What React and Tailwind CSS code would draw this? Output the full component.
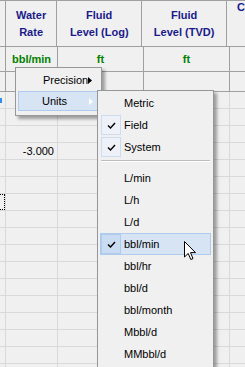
import React from 'react'

const font = "font-['Liberation_Sans',Arial,sans-serif]"

function Check() {
  return (
    <svg width="9" height="7" viewBox="0 0 9 7">
      <polyline points="1,3.5 3.5,6 8,1" fill="none" stroke="#000" strokeWidth="1.4" />
    </svg>
  )
}

function Arrow({ color }) {
  return (
    <svg width="4" height="7" viewBox="0 0 4 7">
      <polygon points="0,0 4,3.5 0,7" fill={color} />
    </svg>
  )
}

function Cursor() {
  return (
    <svg width="13" height="20" viewBox="0 0 13 20">
      <path
        d="M0.5 0.5 L0.5 16 L4.2 12.4 L6.8 18.5 L9 17.6 L6.5 11.6 L11.5 11.6 Z"
        fill="#fff"
        stroke="#000"
        strokeWidth="1"
        strokeLinejoin="miter"
      />
    </svg>
  )
}

function SubItem({ label, checked, active }) {
  return (
    <div
      className={`h-[22px] flex items-center border ${
        active ? 'bg-[#d6e4f4] border-[#aecbed]' : 'border-transparent'
      }`}
    >
      <div className="w-[22px] h-full flex items-center">
        {checked && (
          <div
            className={`w-[20px] h-[20px] flex items-center justify-center border ${
              active ? 'bg-[#c9dcf2] border-[#aecbed]' : 'bg-[#eef2f8] border-[#cddcee]'
            }`}
          >
            <Check />
          </div>
        )}
      </div>
      <span className="ml-[1px] text-black">{label}</span>
    </div>
  )
}

export default function App() {
  const dataRows = Array.from({ length: 17 })

  return (
    <div className={`relative w-[245px] h-[367px] overflow-hidden bg-[#f0f0f0] text-[11px] ${font}`}>
      <div className="border-t border-[#a0a0a0]">
        {/* header */}
        <div className="flex h-[46px] border-b border-[#a0a0a0] font-bold text-[#1a1a8a] leading-[17px]">
          <div className="w-[6px] border-r border-[#a0a0a0]" />
          <div className="w-[52px] border-r border-[#a0a0a0] flex items-center justify-center text-center">
            Water<br />Rate
          </div>
          <div className="w-[86px] border-r border-[#a0a0a0] flex items-center justify-center text-center">
            Fluid<br />Level (Log)
          </div>
          <div className="w-[86px] border-r border-[#a0a0a0] flex items-center justify-center text-center">
            Fluid<br />Level (TVD)
          </div>
          <div className="flex-1 pl-[10px] leading-[13px]">C</div>
        </div>

        {/* units */}
        <div className="flex h-[25px] border-b border-[#a0a0a0] font-bold text-[#008000]">
          <div className="w-[6px] border-r border-[#a0a0a0]" />
          <div className="w-[52px] border-r border-[#a0a0a0] flex items-center justify-center">bbl/min</div>
          <div className="w-[86px] border-r border-[#a0a0a0] flex items-center justify-center">ft</div>
          <div className="w-[86px] border-r border-[#a0a0a0] flex items-center justify-center">ft</div>
          <div className="flex-1" />
        </div>

        {/* filter row */}
        <div className="flex h-[20px] border-b border-[#a0a0a0]">
          <div className="w-[6px] border-r border-[#a0a0a0]" />
          <div className="w-[52px] border-r border-[#a0a0a0]" />
          <div className="w-[86px] border-r border-[#a0a0a0]" />
          <div className="w-[86px] border-r border-[#a0a0a0]" />
          <div className="flex-1" />
        </div>

        {dataRows.map((_, i) => (
          <div key={i} className="flex h-[17px] border-b border-[#d9d9d9]">
            <div className="w-[6px] border-r border-[#d9d9d9] flex items-center">
              {i === 0 && <div className="w-[2px] h-[5px] bg-[#2f8fe8]" />}
              {i === 6 && (
                <div className="w-[5px] h-full border-y border-r border-dotted border-black" />
              )}
            </div>
            <div className="w-[52px] border-r border-[#d9d9d9] flex items-center justify-end pr-[3px] text-black">
              {i === 3 ? '-3.000' : ''}
            </div>
            <div className="w-[86px] border-r border-[#d9d9d9]" />
            <div className="w-[86px] border-r border-[#d9d9d9]" />
            <div className="flex-1" />
          </div>
        ))}
      </div>

      {/* context menu */}
      <div className="absolute left-[15px] top-[67px] w-[87px] h-[49px] border border-[#979797] bg-[#f0f0f0] pt-[2px] px-[2px] shadow-[3px_3px_3px_rgba(0,0,0,0.35)] text-black">
        <div className="h-[21px] flex items-center pl-[24px] pr-[6px] border border-transparent">
          <span>Precision</span>
          <span className="ml-auto flex"><Arrow color="#000" /></span>
        </div>
        <div className="h-[20px] flex items-center pl-[23px] pr-[5px] bg-[#d6e4f4] border border-[#aecbed]">
          <span>Units</span>
          <span className="ml-auto flex"><Arrow color="#ffffff" /></span>
        </div>
      </div>

      {/* units submenu */}
      <div className="absolute left-[97px] top-[90px] w-[117px] h-[300px] border border-[#979797] bg-[#f0f0f0] pt-[1px] px-[2px] shadow-[3px_3px_3px_rgba(0,0,0,0.35)]">
        <SubItem label="Metric" />
        <SubItem label="Field" checked />
        <SubItem label="System" checked />
        <div className="h-[9px] pt-[2px]">
          <div className="h-px bg-[#bdbdbd] mx-[1px]" />
          <div className="h-px bg-white mx-[1px]" />
        </div>
        <SubItem label="L/min" />
        <SubItem label="L/h" />
        <SubItem label="L/d" />
        <SubItem label="bbl/min" checked active />
        <SubItem label="bbl/hr" />
        <SubItem label="bbl/d" />
        <SubItem label="bbl/month" />
        <SubItem label="Mbbl/d" />
        <SubItem label="MMbbl/d" />
      </div>

      <div className="absolute left-[184px] top-[241px]">
        <Cursor />
      </div>
    </div>
  )
}
